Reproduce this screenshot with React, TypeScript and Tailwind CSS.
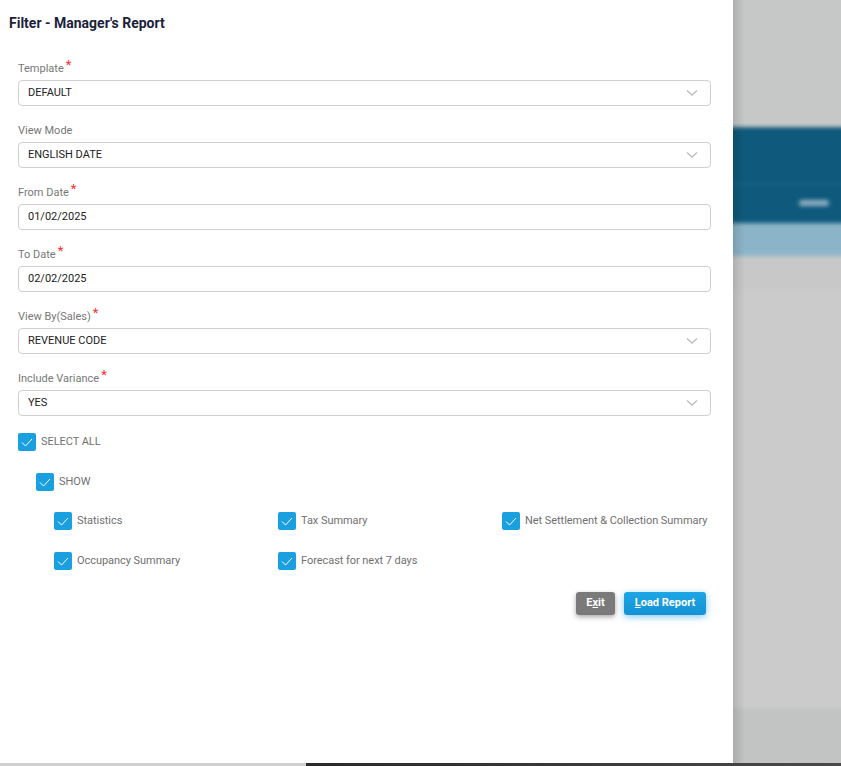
import React from "react";

const font = { fontFamily: "Roboto, 'Liberation Sans', sans-serif" };

function Chevron() {
  return (
    <svg width="12" height="8" viewBox="0 0 12 8" className="shrink-0">
      <path d="M1 1.5 L6 6 L11 1.5" fill="none" stroke="#bdbdbd" strokeWidth="1.4" />
    </svg>
  );
}

function Field({ label, value, required, select }: { label: string; value: string; required?: boolean; select?: boolean }) {
  return (
    <div className="flex flex-col">
      <div className="h-4 flex items-center text-[11px] text-[#777] leading-4">
        <span>{label}</span>
        {required && <span className="text-[#ff2a2a] text-[13px] leading-none relative -top-[5px] ml-[2px]">*</span>}
      </div>
      <div className="mt-[3px] h-[26px] border border-[#cfcfcf] rounded-[4px] flex items-center justify-between pl-[9px] pr-[12px] text-[11px] text-[#222]">
        <span>{value}</span>
        {select && <Chevron />}
      </div>
    </div>
  );
}

function Check({ label, className = "" }: { label: string; className?: string }) {
  return (
    <div className={"flex items-center gap-[5px] " + className}>
      <div className="w-[18px] h-[18px] rounded-[2px] bg-[#1a9fe0] flex items-center justify-center shrink-0">
        <svg width="12" height="9" viewBox="0 0 12 9">
          <path d="M1 4.5 L4.5 8 L11 1" fill="none" stroke="#fff" strokeWidth="1" />
        </svg>
      </div>
      <span className="text-[11px] text-[#707070] whitespace-nowrap tracking-[-0.05px]">{label}</span>
    </div>
  );
}

export default function App() {
  return (
    <div className="h-[766px] w-full flex flex-col overflow-hidden" style={font}>
      <div className="flex flex-1 min-h-0">
        <div className="w-[733px] shrink-0 bg-white flex flex-col pt-[15px]">
          <h1 className="pl-[9px] text-[14px] font-bold text-[#1b1f3a] leading-[17px]">Filter - Manager's Report</h1>
          <div className="pl-[18px] pr-[22px] mt-[29px] flex flex-col gap-[17px]">
            <Field label="Template" value="DEFAULT" required select />
            <Field label="View Mode" value="ENGLISH DATE" select />
            <Field label="From Date" value="01/02/2025" required />
            <Field label="To Date" value="02/02/2025" required />
            <Field label="View By(Sales)" value="REVENUE CODE" required select />
            <Field label="Include Variance" value="YES" required select />
          </div>
          <div className="pl-[18px] mt-[17px] flex flex-col">
            <Check label="SELECT ALL" />
            <Check label="SHOW" className="ml-[18px] mt-[22px]" />
            <div className="ml-[36px] mt-[21px] grid grid-cols-[224px_224px_auto] gap-y-[22px]">
              <Check label="Statistics" />
              <Check label="Tax Summary" />
              <Check label="Net Settlement & Collection Summary" />
              <Check label="Occupancy Summary" />
              <Check label="Forecast for next 7 days" />
            </div>
          </div>
          <div className="mt-[22px] pr-[27px] flex justify-end gap-[9px]">
            <button className="h-[23px] w-[39px] rounded-[3px] bg-[#7a7a7a] text-white text-[11px] font-bold shadow-[0_2px_5px_rgba(0,0,0,0.35)]">
              E<span className="underline">x</span>it
            </button>
            <button className="h-[23px] w-[82px] rounded-[3px] bg-gradient-to-b from-[#1ea6e6] to-[#1592d3] text-white text-[11px] font-bold shadow-[0_2px_7px_rgba(30,160,225,0.55)]">
              <span className="underline">L</span>oad Report
            </button>
          </div>
        </div>
        <div className="flex-1 relative bg-[#cbcbcb] overflow-hidden">
          <div className="absolute -inset-[6px] flex flex-col blur-[2px]">
            <div className="h-[130px] bg-[#c6c7c7]" />
            <div className="h-[3px] bg-[#cdcece]" />
            <div className="h-[96px] bg-[#0f597c] flex flex-col">
              <div className="h-[56px]" />
              <div className="h-[2px] bg-[#1a6588]" />
              <div className="flex justify-end pr-[18px] pt-[15px]">
                <div className="w-[30px] h-[6px] rounded-full bg-[#8fb0c2]" />
              </div>
            </div>
            <div className="h-[33px] bg-[#8cb4c8]" />
            <div className="h-[34px] bg-[#c8c8c8]" />
            <div className="flex-1 bg-[#cbcbcb]" />
            <div className="h-[61px] bg-[#c2c3c3]" />
          </div>
          <div className="absolute left-0 top-0 bottom-0 w-[12px] bg-gradient-to-r from-black/[0.12] to-transparent" />
        </div>
      </div>
      <div className="h-[3px] flex shrink-0">
        <div className="w-[306px] bg-[#cfcfcf]" />
        <div className="flex-1 bg-gradient-to-r from-[#2a2a2a] to-[#4a4a4a]" />
      </div>
    </div>
  );
}
